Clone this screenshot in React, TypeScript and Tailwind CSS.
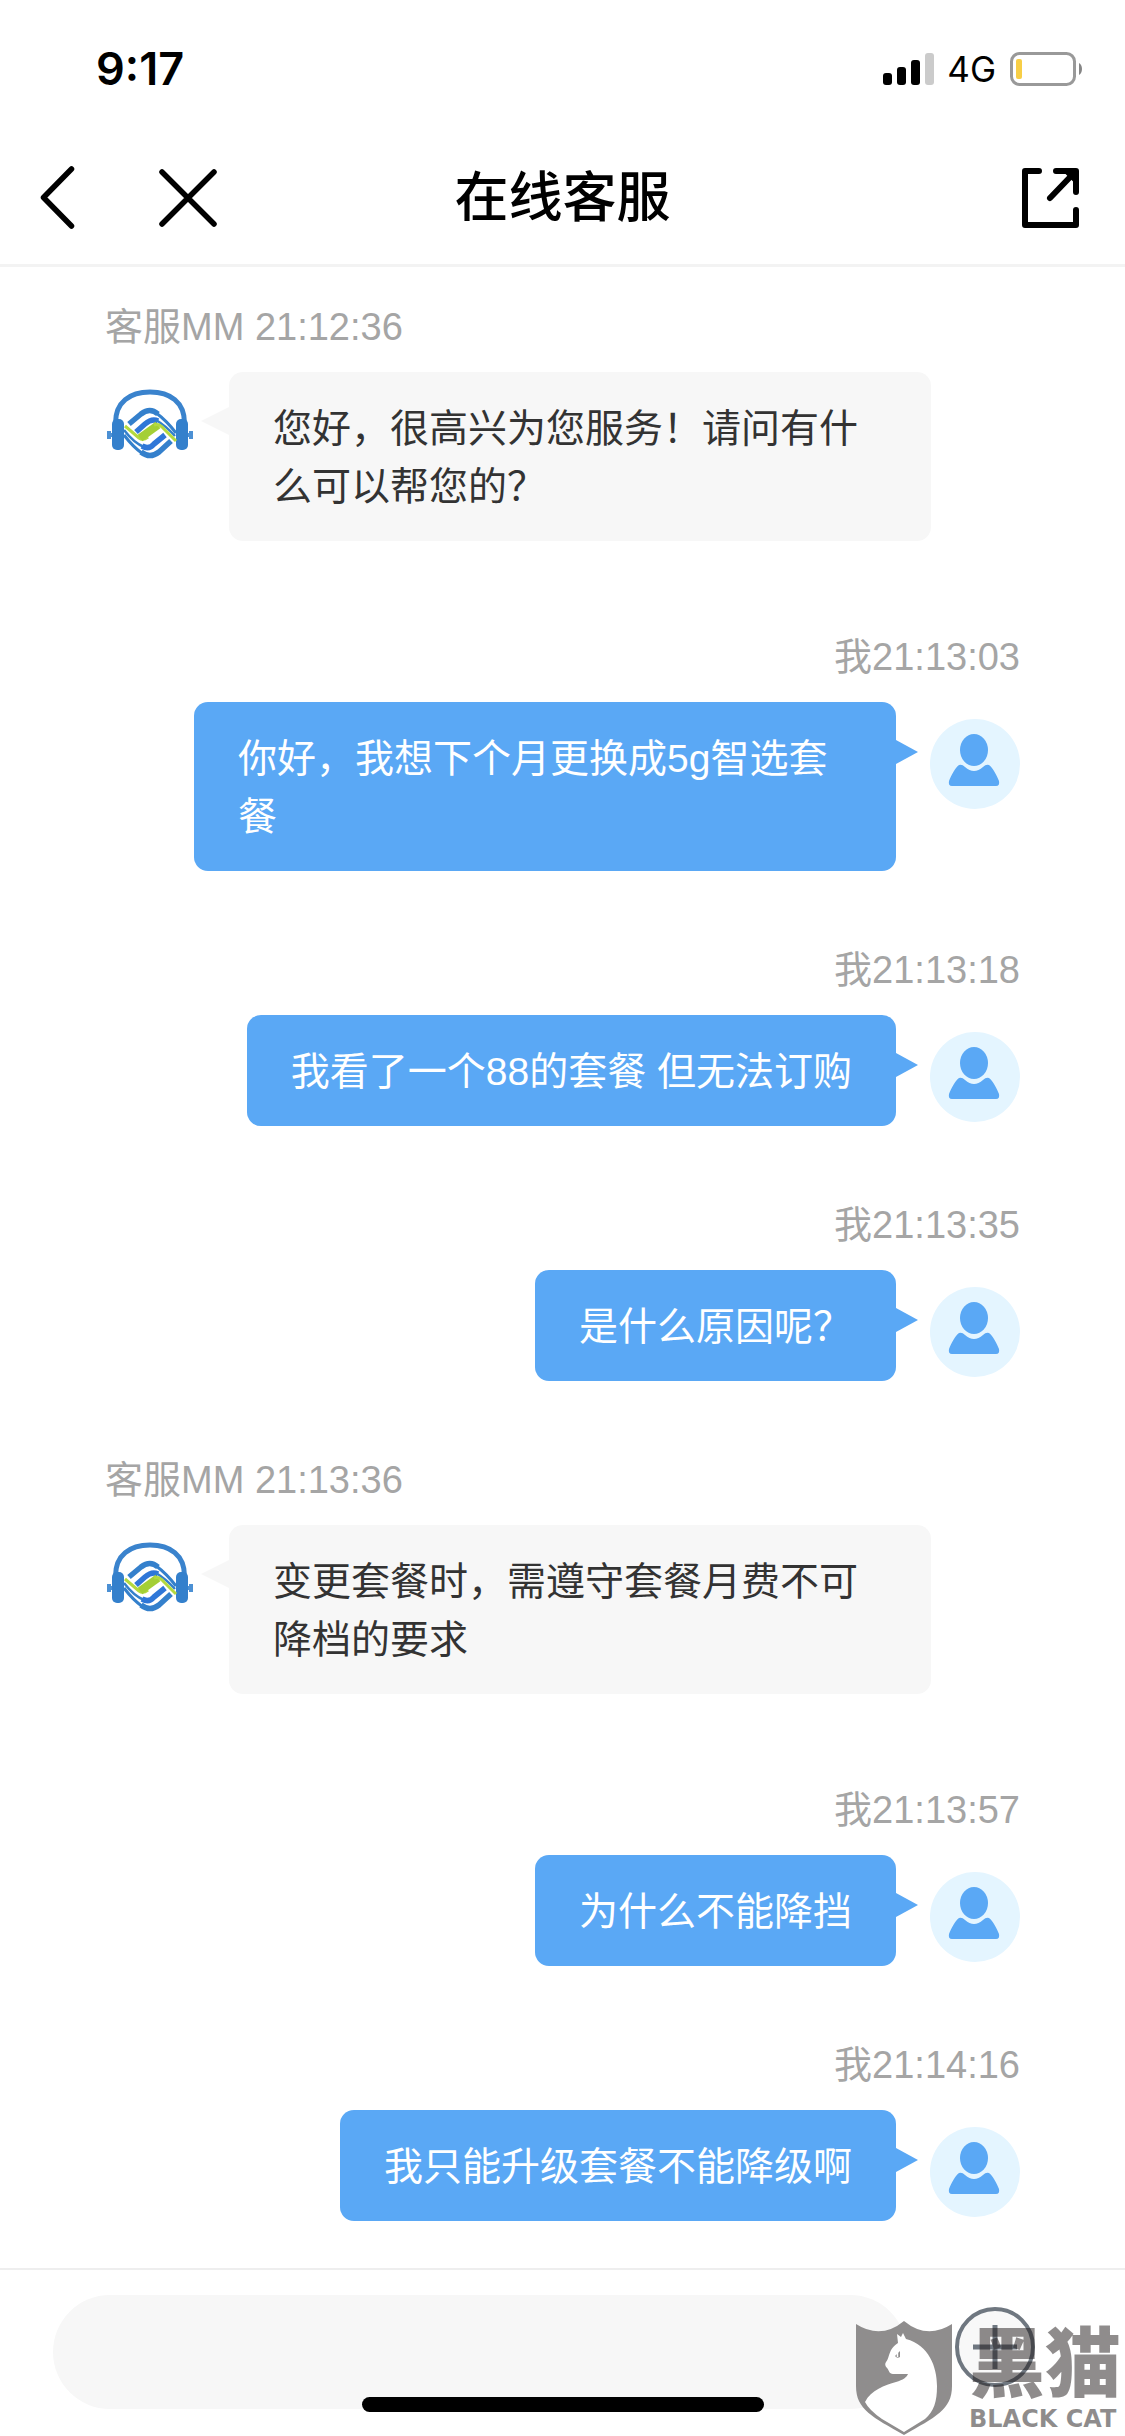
import React from "react";

type Message = { from: "agent" | "me"; time: string; text: string };

const messages: Message[] = [
  { from: "agent", time: "21:12:36", text: "您好，很高兴为您服务！请问有什么可以帮您的？" },
  { from: "me", time: "21:13:03", text: "你好，我想下个月更换成5g智选套餐" },
  { from: "me", time: "21:13:18", text: "我看了一个88的套餐 但无法订购" },
  { from: "me", time: "21:13:35", text: "是什么原因呢？" },
  { from: "agent", time: "21:13:36", text: "变更套餐时，需遵守套餐月费不可降档的要求" },
  { from: "me", time: "21:13:57", text: "为什么不能降挡" },
  { from: "me", time: "21:14:16", text: "我只能升级套餐不能降级啊" },
];

function StatusBar() {
  return (
    <div className="flex h-[132px] items-start justify-between pl-24 pr-[43px] pt-[42px] font-['Inter',sans-serif]">
      <span className="text-[45px] font-semibold leading-[54px]">9:17</span>
      <div className="flex h-[54px] items-center">
        <svg width="52" height="34" viewBox="0 0 52 34" aria-hidden="true">
          <rect x="0" y="21" width="9" height="12" rx="3" />
          <rect x="14" y="15" width="9" height="18" rx="3" />
          <rect x="28" y="8" width="9" height="25" rx="3" />
          <rect x="42" y="1" width="9" height="32" rx="3" fill="#cbcbcb" />
        </svg>
        <span className="ml-3 text-[35px] leading-[54px]">4G</span>
        <svg className="ml-[14px]" width="72" height="34" viewBox="0 0 72 34" aria-label="电池电量低">
          <rect x="1.5" y="1.5" width="63" height="31" rx="8" fill="none" stroke="#999" strokeWidth="3" />
          <rect x="6" y="7" width="6" height="20" rx="2" fill="#f7ce46" />
          <path d="M69 11c4 2 4 10 0 12z" fill="#858585" />
        </svg>
      </div>
    </div>
  );
}

function NavBar() {
  return (
    <header className="grid h-[135px] grid-cols-[1fr_auto_1fr] items-center border-b-[3px] border-[#f3f3f3] px-[39px]">
      <div className="flex items-center gap-20">
        <button type="button" aria-label="返回">
          <svg width="38" height="66" viewBox="0 0 38 66" fill="none" stroke="#000" strokeWidth="5.500" strokeLinecap="round" strokeLinejoin="round">
            <path d="M32.500 4 4.500 32.500 32.500 61" />
          </svg>
        </button>
        <button type="button" aria-label="关闭">
          <svg width="62" height="60" viewBox="0 0 62 60" fill="none" stroke="#000" strokeWidth="5.500" strokeLinecap="round">
            <path d="M5 4 57 56M57 4 5 56" />
          </svg>
        </button>
      </div>
      <h1 className="text-[54px] font-medium leading-[72px]">在线客服</h1>
      <button type="button" aria-label="分享" className="justify-self-end pr-[6px]">
        <svg width="60" height="62" viewBox="0 0 60 62" fill="none" stroke="#000" strokeWidth="6" strokeLinecap="round" strokeLinejoin="round">
          <path d="M19 4H5V58H56V43M36 4H56V25M54 6 30 31" />
          <path d="M46 6H54V14Z" fill="#000" strokeWidth="2" />
        </svg>
      </button>
    </header>
  );
}

function AgentAvatar() {
  return (
    <svg className="mt-[15px] w-[90px] shrink-0" height="80" viewBox="0 0 90 80" fill="none" strokeLinejoin="round" role="img" aria-label="客服">
      <path d="M10.500 36C10.500 15 25 5 45 5S79.500 15 79.500 36" stroke="#3a83cd" strokeWidth="5" />
      <path d="M4 44v8M86 44v8M2 48H8M82 48H88" stroke="#4c90d4" strokeWidth="4" />
      <rect x="7" y="32" width="12" height="31" rx="5" fill="#3480cc" />
      <rect x="71" y="32" width="12" height="31" rx="5" fill="#3480cc" />
      <path d="M24 37 36 27Q45 20 53 27" stroke="#3480cc" strokeWidth="5.500" />
      <path d="M50 25Q62 34 71 46" stroke="#3480cc" strokeWidth="3" />
      <path d="M31 45 40 37Q47 31 53 34" stroke="#2f77d8" strokeWidth="5.500" />
      <path d="M51 33Q61 39 70 49" stroke="#3480cc" strokeWidth="2.500" />
      <path d="M20 39 34 51Q38 54 43 50" stroke="#b4d93f" strokeWidth="3" />
      <path d="M35 51 53 38" stroke="#a4cf35" strokeWidth="8" />
      <path d="M49 38Q54 36 59 42L71 54" stroke="#b4d93f" strokeWidth="3" />
      <path d="M19 43Q29 56 39 60" stroke="#3480cc" strokeWidth="2.500" />
      <path d="M37 59Q44 63 49 57L60 48" stroke="#2f77d8" strokeWidth="5.500" />
      <path d="M19 48Q28 60 38 67" stroke="#3480cc" strokeWidth="3" />
      <path d="M36 65Q45 72 54 65L66 54" stroke="#3480cc" strokeWidth="5.500" />
    </svg>
  );
}

function UserAvatar() {
  return (
    <svg className="mt-[17px] w-[90px] shrink-0" height="90" viewBox="0 0 90 90" role="img" aria-label="我">
      <circle cx="45" cy="45" r="45" fill="#e4f5ff" />
      <ellipse cx="44" cy="31" rx="14" ry="16" fill="#5aa8f5" />
      <path d="M29 46Q32 45 35 48Q44 56 53 48Q56 45 59 46C63 49 67 57 69 62Q70 67 66 67H22Q18 67 19 62C21 57 25 49 29 46Z" fill="#5aa8f5" />
    </svg>
  );
}

function ChatMessage({ from, time, text }: Message) {
  if (from === "agent") {
    return (
      <li className="mb-[89px]">
        <p className="mb-[18px] text-[38px] leading-[54px] text-[#a5a5a5]">客服MM {time}</p>
        <div className="flex items-start gap-[34px]">
          <AgentAvatar />
          <p className="relative max-w-[702px] rounded-[14px] bg-[#f7f7f7] px-11 pb-[25px] pt-7 text-[39px] leading-[58px] text-[#333]">
            {text}
            <span className="absolute right-full top-[35px] h-7 w-7 bg-[#f7f7f7] [clip-path:polygon(100%_0,0_50%,100%_100%)]" />
          </p>
        </div>
      </li>
    );
  }
  return (
    <li className="mb-[72px]">
      <p className="mb-[18px] text-right text-[38px] leading-[54px] text-[#a5a5a5]">我{time}</p>
      <div className="flex items-start justify-end gap-[34px]">
        <p className="relative max-w-[702px] rounded-[14px] bg-[#5aa8f5] px-11 pb-[25px] pt-7 text-[39px] leading-[58px] text-white">
          {text}
          <span className="absolute left-full top-[38px] h-6 w-[22px] bg-[#5aa8f5] [clip-path:polygon(0_0,100%_50%,0_100%)]" />
        </p>
        {/* The row keeps the height of its bubble; the avatar may reach below it. */}
        <div className="h-[90px]">
          <UserAvatar />
        </div>
      </div>
    </li>
  );
}

function Watermark() {
  return (
    <div className="pointer-events-none absolute bottom-0 right-1 flex items-end gap-4">
      <svg width="98" height="116" viewBox="0 0 98 116" aria-hidden="true">
        <path d="M1 4Q26 20 49 1Q72 20 97 4V66C97 90 80 97 49 115C18 97 1 90 1 66Z" fill="#8f8d8d" />
        <path d="M42 14 46 17 48 13 51 19C74 25 82 47 82 66C82 82 79 91 70 99L49 112 27 99Q14 90 10 82C16 70 30 65 41 62C48 60 52 57 53 54L38 54C34 54 34 50 32 48Q29 45 31 42C35 38 33 29 43 23Z" fill="#fff" />
        <path d="M40 36 45 31 45 37Q42 39 40 36Z" fill="#8f8d8d" />
        <path d="M42.500 32.500V37" stroke="#fff" strokeWidth="1.500" />
      </svg>
      <div className="pb-[3px] text-[rgba(32,26,26,0.5)]">
        <div className="text-[76px] font-black leading-[80px]">黑猫</div>
        <div className="font-['DejaVu_Sans',sans-serif] text-[24px] font-bold leading-7">BLACK CAT</div>
      </div>
    </div>
  );
}

function Composer() {
  return (
    <footer className="relative flex items-start gap-12 border-t-2 border-[#eee] pb-[27px] pl-[53px] pr-[90px] pt-[25px]">
      <input type="text" aria-label="输入消息" className="h-[114px] min-w-0 flex-1 rounded-full bg-[#f7f7f7] px-12 text-[39px] outline-none" />
      <button type="button" aria-label="更多" className="mt-3">
        <svg width="80" height="80" viewBox="0 0 80 80" stroke="#6f7780" fill="#f8f8f8">
          <circle cx="40" cy="40" r="38" strokeWidth="4" />
          <path d="M40 18V62M18 40H62" strokeWidth="5" />
        </svg>
      </button>
      <div className="absolute bottom-6 left-1/2 h-[15px] w-[402px] -translate-x-1/2 rounded-full bg-black" />
      <Watermark />
    </footer>
  );
}

export default function App() {
  return (
    <div className="flex min-h-screen flex-col bg-white font-['Liberation_Sans','Noto_Sans_CJK_SC',sans-serif] text-black">
      <StatusBar />
      <NavBar />
      <main className="flex-1 px-[105px] pt-[33px]">
        <ul className="-mb-[26px]">
          {messages.map((m) => (
            <ChatMessage key={m.time} {...m} />
          ))}
        </ul>
      </main>
      <Composer />
    </div>
  );
}
